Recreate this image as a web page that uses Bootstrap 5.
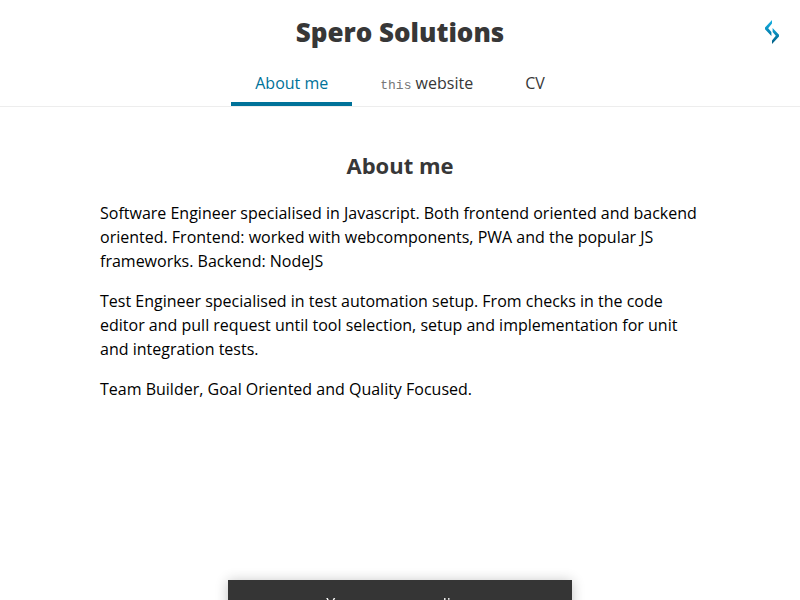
<!DOCTYPE html>
<html lang="en">
<head>
<meta charset="utf-8">
<meta name="viewport" content="width=device-width, initial-scale=1">
<title>Spero Solutions</title>
<link href="https://cdn.jsdelivr.net/npm/bootstrap@5.3.0/dist/css/bootstrap.min.css" rel="stylesheet">
<style>
body{font-family:"Open Sans",sans-serif;font-size:16px;line-height:24px;color:#000;height:100vh;overflow:hidden}
.site-header{height:107px;border-bottom:1px solid #ededed}
.site-title{font-size:26px;line-height:64px;height:64px;font-weight:800;color:#373737}
.logo{right:20px;top:20px}
.tabs{height:42px}
.tabs .nav-link{color:#373737;padding:7px 24px 0;border-bottom:4px solid transparent;height:42px}
.tabs .nav-link.active{color:#007299;border-color:#007299}
.tabs code{font-family:Courier,"Courier New","Liberation Mono",monospace;font-size:13px;color:#777}
.page-body{width:600px;padding-top:43px}
.page-body h2{font-size:22px;line-height:30px;font-weight:700;color:#373737;margin-bottom:21px}
.toast-bar{bottom:-28px;left:228px;width:344px;height:48px;background:#353535;color:#fff;font-size:16px;line-height:48px;box-shadow:0 1px 12px rgba(0,0,0,.24)}
</style>
</head>
<body>
<header class="site-header position-relative text-center">
<h1 class="site-title m-0">Spero Solutions</h1>
<svg class="logo position-absolute" width="16" height="24" viewBox="0 0 16 24">
<defs><linearGradient id="g" x1="0" y1="0" x2="0" y2="1"><stop offset="0" stop-color="#18b4e6"/><stop offset="1" stop-color="#0077a6"/></linearGradient><linearGradient id="h" x1="0" y1="0" x2="0" y2="1"><stop offset="0" stop-color="#10a6d8"/><stop offset="1" stop-color="#005a80"/></linearGradient></defs>
<path d="M8 0V3.6L4.2 8.2L7.4 12V16L1 9.2V7.6Z" fill="url(#g)"/><path d="M8 24V20.4L11.8 15.8L8.6 12V8L15 14.8V16.4Z" fill="url(#h)"/></svg>
<nav class="nav tabs justify-content-center gap-1">
<a class="nav-link active" href="#">About me</a>
<a class="nav-link" href="#"><code>this</code> website</a>
<a class="nav-link" href="#">CV</a>
</nav>
</header>
<main class="page-body mx-auto">
<h2 class="text-center">About me</h2>
<p>Software Engineer specialised in Javascript. Both frontend oriented and backend oriented. Frontend: worked with webcomponents, PWA and the popular JS frameworks. Backend: NodeJS</p>
<p>Test Engineer specialised in test automation setup. From checks in the code editor and pull request until tool selection, setup and implementation for unit and integration tests.</p>
<p>Team Builder, Goal Oriented and Quality Focused.</p>
</main>
<div class="toast-bar position-fixed text-center">You are now online.</div>
<script src="https://cdn.jsdelivr.net/npm/bootstrap@5.3.0/dist/js/bootstrap.bundle.min.js"></script>
</body>
</html>
